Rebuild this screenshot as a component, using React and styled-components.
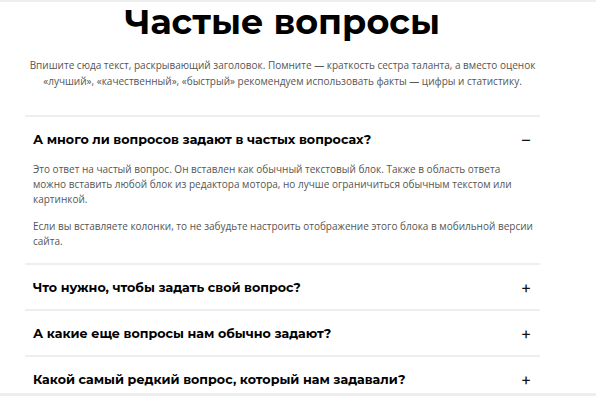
import React from "react";
import styled, { createGlobalStyle } from "styled-components";

const Global = createGlobalStyle`
  html, body { margin: 0; padding: 0; background: #fff; }
  body { font-family: "Open Sans", "Noto Sans", sans-serif; }
`;

const Page = styled.div`
  box-sizing: border-box;
  border-top: 2px solid #eeeeee;
  border-bottom: 3px solid #eeeeee;
  width: 596px;
  height: 396px;
  overflow: hidden;
`;

const Section = styled.section`
  width: 515px;
  margin-left: 25px;
  display: flex;
  flex-direction: column;
`;

const Title = styled.h1`
  margin: 0;
  font-family: "Montserrat", "Inter", sans-serif;
  font-weight: 700;
  font-size: 35px;
  line-height: 40px;
  text-align: center;
  color: #000;
`;

const Lead = styled.p`
  margin: 15px 0 0;
  font-size: 10px;
  line-height: 16px;
  color: #555;
  text-align: center;
`;

const List = styled.div`
  margin-top: 26px;
  display: flex;
  flex-direction: column;
`;

const Item = styled.div`
  border-top: 2px solid #eeeeee;
`;

const Head = styled.div`
  display: flex;
  align-items: center;
  justify-content: space-between;
  padding: 0 8px;
  height: 44px;
`;

const Question = styled.span`
  font-family: "Montserrat", "Inter", sans-serif;
  font-weight: 700;
  font-size: 12.7px;
  color: #000;
`;

const Sign = styled.span`
  font-family: "Inter", sans-serif;
  font-size: 16px;
  color: #111;
  width: 12px;
  text-align: center;
`;

const Answer = styled.div`
  padding: 1px 0 14px 8px;
  font-size: 10px;
  line-height: 15px;
  color: #555;
  white-space: nowrap;
  p { margin: 0 0 12px; }
  p:last-child { margin-bottom: 0; }
`;

const faqs = [
  { q: "А много ли вопросов задают в частых вопросах?", open: true },
  { q: "Что нужно, чтобы задать свой вопрос?" },
  { q: "А какие еще вопросы нам обычно задают?" },
  { q: "Какой самый редкий вопрос, который нам задавали?" },
];

export default function App() {
  return (
    <>
      <Global />
      <Page>
        <Section>
          <Title>Частые вопросы</Title>
          <Lead>
            Впишите сюда текст, раскрывающий заголовок. Помните — краткость сестра таланта, а вместо оценок
            <br />
            «лучший», «качественный», «быстрый» рекомендуем использовать факты — цифры и статистику.
          </Lead>
          <List>
            {faqs.map((f) => (
              <Item key={f.q}>
                <Head>
                  <Question>{f.q}</Question>
                  <Sign>{f.open ? "–" : "+"}</Sign>
                </Head>
                {f.open && (
                  <Answer>
                    <p>
                      Это ответ на частый вопрос. Он вставлен как обычный текстовый блок. Также в область ответа
                      <br />
                      можно вставить любой блок из редактора мотора, но лучше ограничиться обычным текстом или
                      <br />
                      картинкой.
                    </p>
                    <p>
                      Если вы вставляете колонки, то не забудьте настроить отображение этого блока в мобильной версии
                      <br />
                      сайта.
                    </p>
                  </Answer>
                )}
              </Item>
            ))}
          </List>
        </Section>
      </Page>
    </>
  );
}
